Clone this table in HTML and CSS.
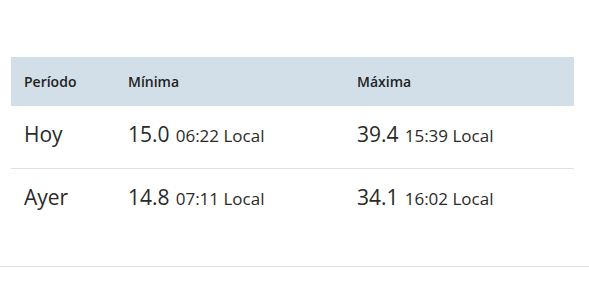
FILE: index.html
```html
<!DOCTYPE html>
<html lang="es">
<head>
<meta charset="utf-8">
<link rel="stylesheet" href="styles.css">
</head>
<body>
<div class="page">
  <div class="table">
    <div class="row head">
      <div class="cell">Período</div>
      <div class="cell">Mínima</div>
      <div class="cell">Máxima</div>
    </div>
    <div class="row">
      <div class="cell label">Hoy</div>
      <div class="cell"><span class="val">15.0</span> <span class="time">06:22 Local</span></div>
      <div class="cell"><span class="val">39.4</span> <span class="time">15:39 Local</span></div>
    </div>
    <div class="row">
      <div class="cell label">Ayer</div>
      <div class="cell"><span class="val">14.8</span> <span class="time">07:11 Local</span></div>
      <div class="cell"><span class="val">34.1</span> <span class="time">16:02 Local</span></div>
    </div>
  </div>
  <div class="rule"></div>
</div>
</body>
</html>
```
FILE: styles.css
```css
html, body {
  margin: 0;
  padding: 0;
  background: #fff;
}
body {
  font-family: "Open Sans", "Noto Sans", sans-serif;
  color: #2a2a2a;
}
.page {
  padding-top: 57px;
}
.table {
  margin: 0 15px 0 11px;
}
.row {
  display: grid;
  grid-template-columns: 104px 229px 1fr;
  align-items: center;
  height: 62px;
  box-sizing: content-box;
  border-bottom: 1px solid #e0e0e0;
  padding-left: 13px;
}
.row .cell {
  padding-bottom: 6px;
}
.row:last-child {
  border-bottom: none;
}
.row.head {
  height: 49px;
  background: #d3dfe8;
  border-bottom: none;
  font-size: 14px;
  font-weight: 600;
  color: #222;
}
.row.head .cell {
  padding-bottom: 1px;
}
.label {
  font-size: 21px;
}
.val {
  font-size: 21px;
}
.time {
  font-size: 17px;
  margin-left: 2px;
}
.rule {
  margin-top: 35px;
  height: 1px;
  background: #e0e0e0;
}
```
